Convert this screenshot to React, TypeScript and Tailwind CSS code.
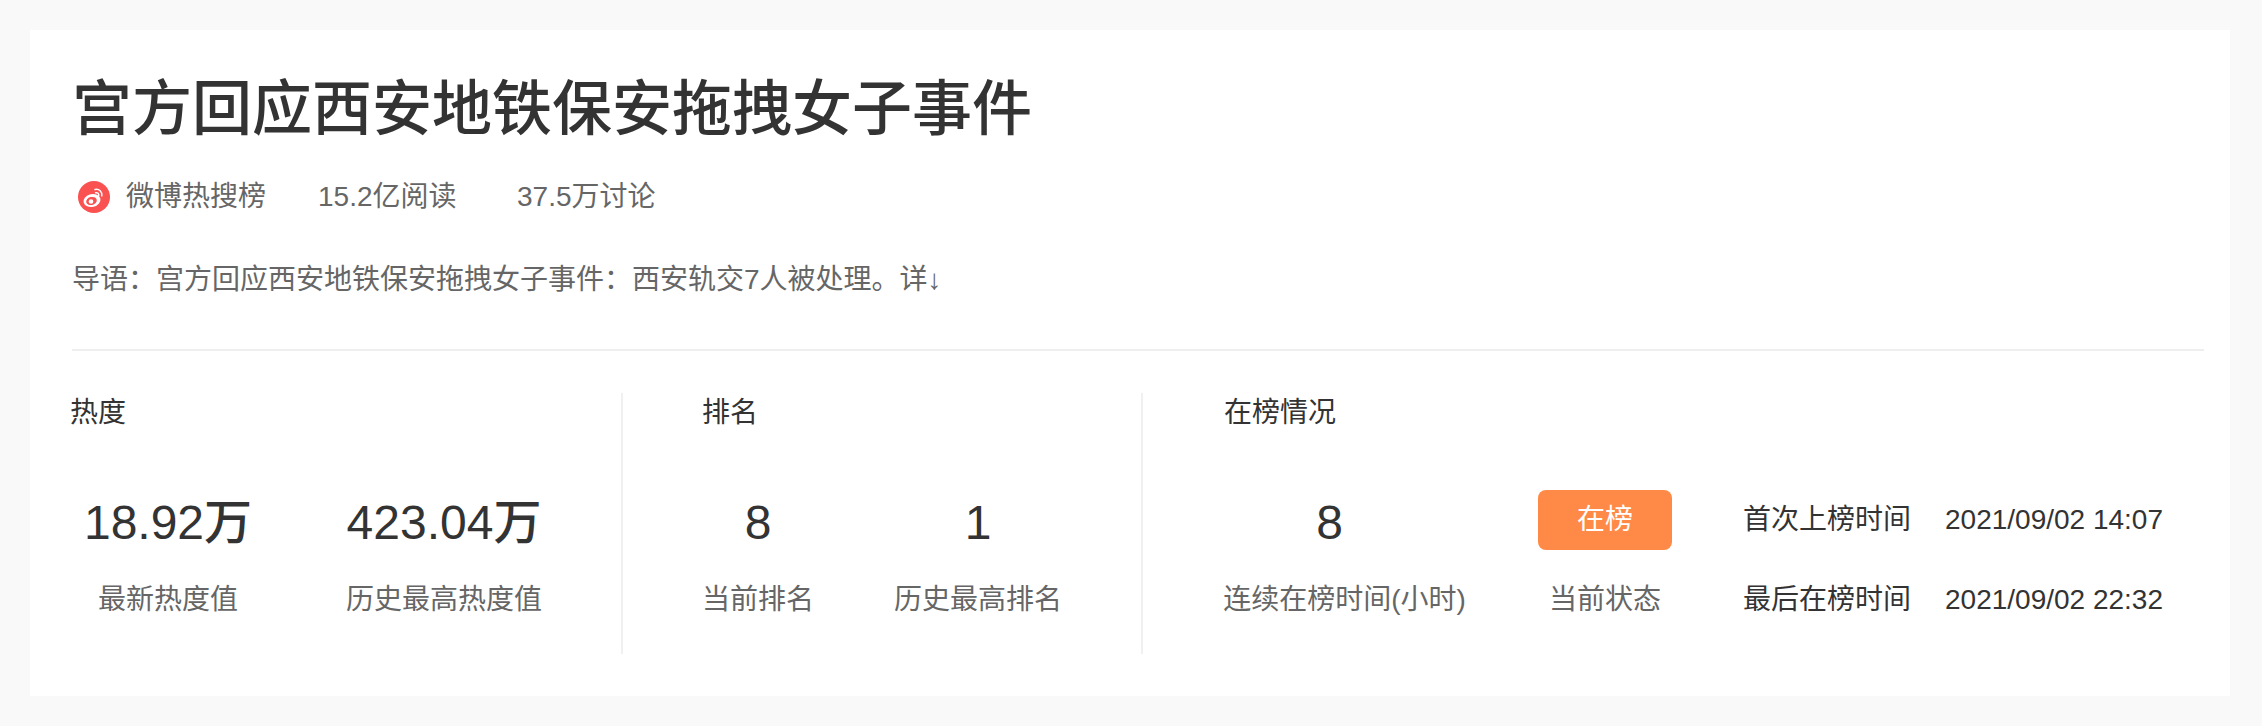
const F = "font-['Liberation_Sans','Noto_Sans_CJK_SC',sans-serif]";

function WeiboIcon() {
  return (
    <svg width="32" height="32" viewBox="0 0 32 32" className="shrink-0">
      <circle cx="16" cy="16" r="16" fill="#fa5151" />
      <ellipse cx="14" cy="19.5" rx="8.6" ry="6.4" fill="#fff" transform="rotate(-14 14 19.5)" />
      <ellipse cx="13.5" cy="20" rx="5.4" ry="4" fill="#fa5151" transform="rotate(-14 13.5 20)" />
      <circle cx="13" cy="20.5" r="2.3" fill="#fff" />
      <path d="M17 8.5c4-1 7.5 2.2 6.8 6.4" fill="none" stroke="#fff" strokeWidth="1.5" strokeLinecap="round" />
      <path d="M17.6 11.7c2-.4 3.4 1.1 3.1 3" fill="none" stroke="#fff" strokeWidth="1.5" strokeLinecap="round" />
    </svg>
  );
}

function Stat({ value, label, className, valueClass = "" }: { value: string; label: string; className: string; valueClass?: string }) {
  return (
    <div className={`flex flex-col items-center shrink-0 ${className}`}>
      <div className={`text-[48px] leading-[60px] text-[#333] font-medium whitespace-nowrap ${valueClass}`}>{value}</div>
      <div className="mt-[27px] text-[28px] leading-[40px] text-[#666] whitespace-nowrap">{label}</div>
    </div>
  );
}

export default function App() {
  return (
    <div className={`${F} w-[2262px] h-[726px] bg-[#f9f9f9] pt-[30px] pl-[30px] overflow-hidden`}>
      <div className="w-[2200px] h-[666px] bg-white pt-[40px]">
        <div className="pl-[42px] text-[60px] leading-[80px] font-medium text-[#333] whitespace-nowrap">
          宫方回应西安地铁保安拖拽女子事件
        </div>
        <div className="mt-[27px] pl-[48px] h-[40px] flex items-center text-[28px] text-[#666] whitespace-nowrap">
          <WeiboIcon />
          <span className="ml-[16px] w-[192px]">微博热搜榜</span>
          <span className="w-[199px]">15.2亿阅读</span>
          <span>37.5万讨论</span>
        </div>
        <div className="mt-[43px] pl-[42px] text-[28px] leading-[40px] text-[#666] whitespace-nowrap">
          导语：宫方回应西安地铁保安拖拽女子事件：西安轨交7人被处理。详↓
        </div>
        <div className="mt-[49px] ml-[42px] w-[2132px] h-[2px] bg-[#eeeeee]" />
        <div className="mt-[42px] pl-[40px] flex">
          <div className="w-[553px] h-[261px] border-r-2 border-[#f0f0f0] shrink-0">
            <div className="text-[28px] leading-[40px] text-[#333]">热度</div>
            <div className="mt-[60px] flex">
              <Stat value="18.92万" label="最新热度值" className="w-[196px]" />
              <Stat value="423.04万" label="历史最高热度值" className="w-[240px] ml-[58px]" />
            </div>
          </div>
          <div className="w-[520px] h-[261px] border-r-2 border-[#f0f0f0] pl-[79px] shrink-0">
            <div className="text-[28px] leading-[40px] text-[#333]">排名</div>
            <div className="mt-[60px] flex">
              <Stat value="8" label="当前排名" className="w-[112px]" />
              <Stat value="1" label="历史最高排名" className="w-[168px] ml-[80px]" />
            </div>
          </div>
          <div className="pl-[81px] h-[261px]">
            <div className="text-[28px] leading-[40px] text-[#333]">在榜情况</div>
            <div className="mt-[60px] flex">
              <Stat value="8" label="连续在榜时间(小时)" className="w-[241px]" valueClass="mr-[30px]" />
              <div className="ml-[73px] w-[134px] flex flex-col items-center shrink-0">
                <div className="-mt-[3px] w-[134px] h-[60px] rounded-[8px] bg-[#ff8a47] text-white text-[28px] flex items-center justify-center">在榜</div>
                <div className="mt-[30px] text-[28px] leading-[40px] text-[#666] whitespace-nowrap">当前状态</div>
              </div>
              <div className="ml-[71px] shrink-0 text-[28px] text-[#333] whitespace-nowrap">
                <div className="h-[40px] leading-[40px] mt-[7px] flex">
                  <span className="w-[202px]">首次上榜时间</span>
                  <span>2021/09/02 14:07</span>
                </div>
                <div className="h-[40px] leading-[40px] mt-[40px] flex">
                  <span className="w-[202px]">最后在榜时间</span>
                  <span>2021/09/02 22:32</span>
                </div>
              </div>
            </div>
          </div>
        </div>
      </div>
    </div>
  );
}
